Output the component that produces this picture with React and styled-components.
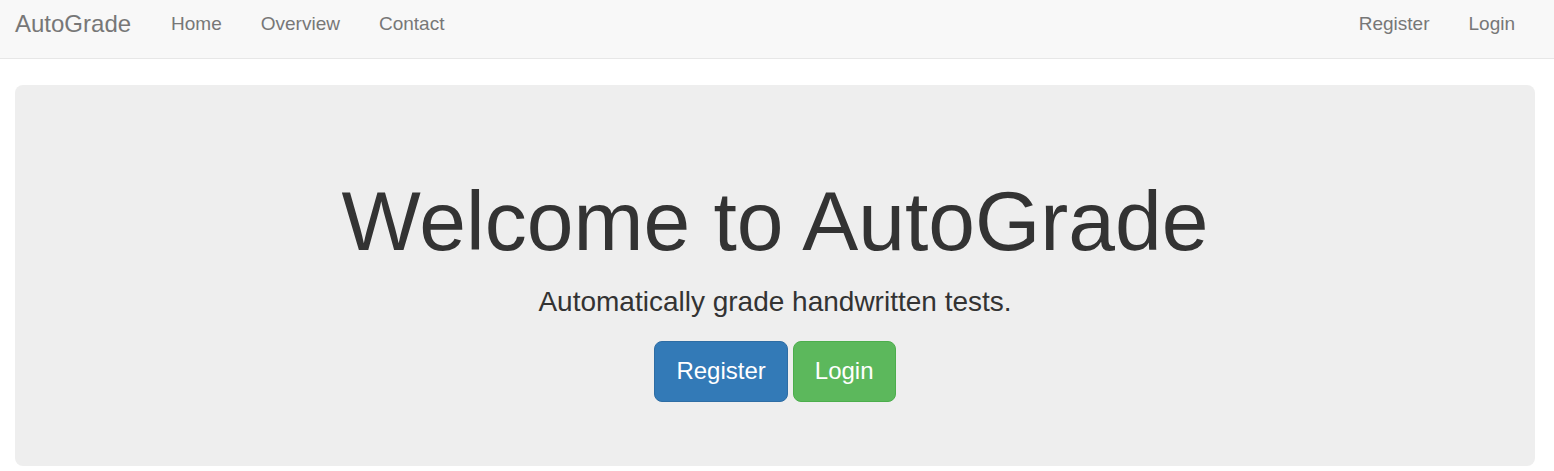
import React from "react";
import styled, { createGlobalStyle } from "styled-components";

const GlobalStyle = createGlobalStyle`
  *, *::before, *::after { box-sizing: border-box; }
  body {
    margin: 0;
    background: #fff;
    color: #333;
    font-family: "Liberation Sans", Arial, sans-serif;
    font-size: 19px;
    line-height: 27px;
  }
`;

const Navbar = styled.nav`
  display: flex;
  align-items: flex-start;
  justify-content: space-between;
  padding: 10px 39px 21px 15px;
  background: #f8f8f8;
  border-bottom: 1px solid #e7e7e7;
`;

const NavGroup = styled.div`
  display: flex;
  align-items: center;
  gap: 40px;
`;

const Brand = styled.a`
  color: #777;
  font-size: 24px;
  text-decoration: none;
`;

const NavList = styled.ul`
  display: flex;
  gap: 39px;
  margin: 0;
  padding: 0;
  list-style: none;
`;

const NavLink = styled.a`
  display: block;
  color: #777;
  text-decoration: none;
`;

const Page = styled.main`
  padding: 26px 19px 5px 15px;
`;

const Jumbotron = styled.section`
  padding: 90px 80px 64px;
  border-radius: 8px;
  background: #eee;
  text-align: center;
`;

const Title = styled.h1`
  margin: 0;
  font-size: 84px;
  font-weight: 400;
  line-height: 92px;
`;

const Lead = styled.p`
  margin: 15px 0 19px;
  font-size: 28px;
  line-height: 40px;
`;

const Actions = styled.div`
  display: flex;
  justify-content: center;
  gap: 5px;
`;

const Button = styled.button`
  padding: 12px 21px 14px;
  border: 1px solid ${({ $primary }) => ($primary ? "#2e6da4" : "#4cae4c")};
  border-radius: 8px;
  background: ${({ $primary }) => ($primary ? "#337ab7" : "#5cb85c")};
  color: #fff;
  font-family: inherit;
  font-size: 24px;
  line-height: 33px;
  cursor: pointer;
`;

const NavItem = ({ children }) => (
  <li>
    <NavLink href="#">{children}</NavLink>
  </li>
);

export default function App() {
  return (
    <>
      <GlobalStyle />
      <Navbar>
        <NavGroup>
          <Brand href="#">AutoGrade</Brand>
          <NavList>
            <NavItem>Home</NavItem>
            <NavItem>Overview</NavItem>
            <NavItem>Contact</NavItem>
          </NavList>
        </NavGroup>
        <NavList>
          <NavItem>Register</NavItem>
          <NavItem>Login</NavItem>
        </NavList>
      </Navbar>
      <Page>
        <Jumbotron>
          <Title>Welcome to AutoGrade</Title>
          <Lead>Automatically grade handwritten tests.</Lead>
          <Actions>
            <Button type="button" $primary>Register</Button>
            <Button type="button">Login</Button>
          </Actions>
        </Jumbotron>
      </Page>
    </>
  );
}
